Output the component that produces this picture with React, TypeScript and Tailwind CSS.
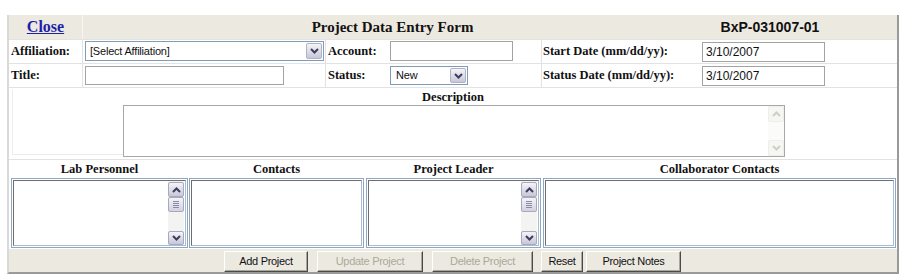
import React from "react";

const sans = "font-['Liberation_Sans',Arial,sans-serif]";

function Chevron({ up = false, color = "#3d3d5c" }: { up?: boolean; color?: string }) {
  return (
    <svg width="9" height="6" viewBox="0 0 9 6">
      <path
        d={up ? "M1 5 L4.5 1.5 L8 5" : "M1 1 L4.5 4.5 L8 1"}
        fill="none"
        stroke={color}
        strokeWidth="2"
      />
    </svg>
  );
}

function ArrowBtn() {
  return (
    <div className="w-[16px] flex items-center justify-center rounded-[2px] border border-[#b2b1c6] bg-linear-to-b from-[#f4f4f8] to-[#c8c7d8]">
      <Chevron />
    </div>
  );
}

function Select({ className, text }: { className: string; text: string }) {
  return (
    <div className={`flex items-stretch border border-[#7f9db9] bg-white p-[1px] ${className}`}>
      <div className={`flex-1 flex items-center pl-[3px] text-[11px] tracking-[-0.2px] text-[#111] ${sans}`}>
        {text}
      </div>
      <ArrowBtn />
    </div>
  );
}

function TextBox({ className, value }: { className: string; value?: string }) {
  return (
    <div
      className={`flex items-center border border-[#a3a3a3] bg-white pl-[3px] text-[12px] text-[#111] ${sans} ${className}`}
    >
      {value}
    </div>
  );
}

function ScrollBar() {
  return (
    <div className="w-[16px] mr-[1px] pt-[1px] flex flex-col bg-[#f3f3f1]">
      <div className="h-[15px] flex items-center justify-center rounded-[2px] border border-[#a9a8bd] bg-linear-to-b from-[#f4f4f8] to-[#c8c7d8]">
        <Chevron up />
      </div>
      <div className="h-[15px] flex flex-col items-center justify-center gap-[1px] rounded-[2px] border border-[#a9a8bd] bg-linear-to-b from-[#f4f4f8] to-[#d2d1e0]">
        <div className="w-[6px] h-px bg-[#8a8aa3]" />
        <div className="w-[6px] h-px bg-[#8a8aa3]" />
        <div className="w-[6px] h-px bg-[#8a8aa3]" />
        <div className="w-[6px] h-px bg-[#8a8aa3]" />
      </div>
      <div className="flex-1" />
      <div className="h-[14px] flex items-center justify-center rounded-[2px] border border-[#a9a8bd] bg-linear-to-b from-[#f4f4f8] to-[#c8c7d8]">
        <Chevron />
      </div>
    </div>
  );
}

function ListBox({ className, scroll }: { className: string; scroll?: boolean }) {
  return (
    <div className={`h-[70px] mt-[1px] border border-[#8ea7c4] bg-white p-[1px] ${className}`}>
      <div className="h-full flex justify-end border border-t-[#6e6e6e] border-l-[#6e6e6e] border-r-[#a7bbd3] border-b-[#a7bbd3]">
        {scroll && <ScrollBar />}
      </div>
    </div>
  );
}

function Button({ label, disabled, className }: { label: string; disabled?: boolean; className: string }) {
  return (
    <div
      className={`h-[21px] flex items-center justify-center bg-[#ece9e1] border border-t-[#ffffff] border-l-[#ffffff] border-r-[#4a4a4a] border-b-[#4a4a4a] shadow-[inset_-1px_-1px_0_#a9a79c] text-[11px] tracking-[-0.3px] ${sans} ${
        disabled ? "text-[#aba89b]" : "text-[#111]"
      } ${className}`}
    >
      {label}
    </div>
  );
}

const labelCls = "text-[12.5px] font-bold text-[#111] leading-[15px]";

export default function App() {
  return (
    <div className="w-[908px] h-[279px] bg-white pt-[15px] pl-[7px] font-['Liberation_Serif','Times_New_Roman',serif]">
      <div className="w-[892px] border-l-2 border-r-2 border-b-2 border-l-[#d9d9d9] border-r-[#9a9a9a] border-b-[#9a9a9a]">
        {/* header */}
        <div className="flex h-[25px] bg-[#ece9e1] border-b border-[#e2e2e2]">
          <div className="w-[74px] flex items-center justify-center border-r border-[#f7f6f2]">
            <span className="text-[16px] font-bold text-[#1f1fa8] underline">Close</span>
          </div>
          <div className="w-[619px] flex items-center justify-center text-[15px] font-bold text-[#111]">
            Project Data Entry Form
          </div>
          <div className={`w-[136px] flex items-center justify-center text-[14px] font-bold text-[#111] ${sans}`}>
            BxP-031007-01
          </div>
        </div>

        {/* row 1 */}
        <div className="flex h-[24px] border-b border-[#e2e2e2]">
          <div className={`w-[74px] flex items-center pl-[2px] border-r border-[#e2e2e2] ${labelCls}`}>
            Affiliation:
          </div>
          <div className="w-[243px] flex items-start pt-[1px] pl-[2px] border-r border-[#e2e2e2]">
            <Select className="w-[239px] h-[20px]" text="[Select Affiliation]" />
          </div>
          <div className="w-[216px] flex items-start border-r border-[#e2e2e2]">
            <div className={`w-[64px] h-[23px] flex items-center pl-[2px] ${labelCls}`}>Account:</div>
            <div className="pt-[1px]">
              <TextBox className="w-[123px] h-[20px]" />
            </div>
          </div>
          <div className="flex-1 flex items-start">
            <div className={`w-[160px] h-[23px] flex items-center pl-[1px] ${labelCls}`}>Start Date (mm/dd/yy):</div>
            <div className="pt-[2px]">
              <TextBox className="w-[123px] h-[20px]" value="3/10/2007" />
            </div>
          </div>
        </div>

        {/* row 2 */}
        <div className="flex h-[24px] border-b border-[#e2e2e2]">
          <div className={`w-[74px] flex items-center pl-[2px] border-r border-[#e2e2e2] ${labelCls}`}>Title:</div>
          <div className="w-[243px] flex items-center pl-[2px] border-r border-[#e2e2e2]">
            <TextBox className="w-[199px] h-[19px]" />
          </div>
          <div className="w-[216px] flex items-center border-r border-[#e2e2e2]">
            <div className={`w-[64px] pl-[2px] ${labelCls}`}>Status:</div>
            <Select className="w-[78px] h-[19px] [&>div:first-child]:pl-[4px]" text="New" />
          </div>
          <div className="flex-1 flex items-center">
            <div className={`w-[160px] pl-[1px] ${labelCls}`}>Status Date (mm/dd/yy):</div>
            <TextBox className="w-[123px] h-[20px]" value="3/10/2007" />
          </div>
        </div>

        {/* description */}
        <div className="h-[72px] border-b border-[#e2e2e2] pt-[2px]">
          <div className={`text-center ${labelCls}`}>Description</div>
          <div className="flex ml-[3px]">
            <div className="w-[111px] h-[65px] -mt-[15px] border-l border-b border-[#ececec]" />
            <div className="w-[662px] h-[52px] flex justify-end border border-[#a8a8a8] bg-white">
              <div className="w-[16px] flex flex-col bg-[#fbfbf9]">
                <div className="h-[16px] flex items-center justify-center rounded-[2px] border border-[#eeeeea] bg-[#f6f6f3]">
                  <Chevron up color="#cfcfc8" />
                </div>
                <div className="flex-1" />
                <div className="h-[16px] flex items-center justify-center rounded-[2px] border border-[#eeeeea] bg-[#f6f6f3]">
                  <Chevron color="#cfcfc8" />
                </div>
              </div>
            </div>
          </div>
        </div>

        {/* lists */}
        <div className="h-[89px] flex pl-[2px] pt-[2px]">
          <div className="w-[177px] flex flex-col">
            <div className={`text-center ${labelCls}`}>Lab Personnel</div>
            <ListBox className="w-[177px]" scroll />
          </div>
          <div className="w-[175px] ml-[1px] flex flex-col">
            <div className={`text-center ${labelCls}`}>Contacts</div>
            <ListBox className="w-[175px]" />
          </div>
          <div className="w-[175px] ml-[2px] flex flex-col">
            <div className={`text-center ${labelCls}`}>Project Leader</div>
            <ListBox className="w-[175px]" scroll />
          </div>
          <div className="w-[353px] ml-[2px] flex flex-col">
            <div className={`text-center ${labelCls}`}>Collaborator Contacts</div>
            <ListBox className="w-[353px]" />
          </div>
        </div>

        {/* buttons */}
        <div className="h-[23px] bg-[#ece9e1] flex items-start pt-[2px] pl-[215px]">
          <Button label="Add Project" className="w-[84px]" />
          <Button label="Update Project" disabled className="w-[106px] ml-[9px]" />
          <Button label="Delete Project" disabled className="w-[101px] ml-[9px]" />
          <Button label="Reset" className="w-[42px] ml-[8px]" />
          <Button label="Project Notes" className="w-[95px] ml-[3px]" />
        </div>
      </div>
    </div>
  );
}
